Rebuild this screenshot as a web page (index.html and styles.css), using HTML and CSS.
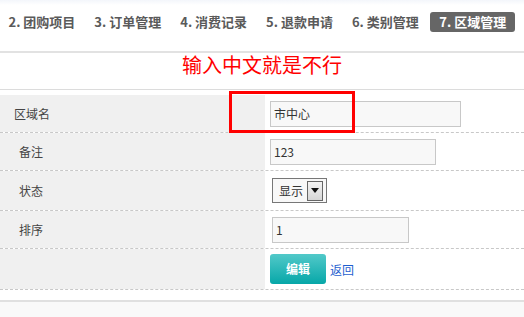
FILE: index.html
```html
<!DOCTYPE html>
<html lang="zh">
<head>
<meta charset="utf-8">
<link rel="stylesheet" href="styles.css">
</head>
<body>
<div class="tabs">
  <span class="tab">2. 团购项目</span>
  <span class="tab">3. 订单管理</span>
  <span class="tab">4. 消费记录</span>
  <span class="tab">5. 退款申请</span>
  <span class="tab">6. 类别管理</span>
  <span class="tab active">7. 区域管理</span>
</div>
<div class="notice">输入中文就是不行</div>
<div class="form">
  <div class="row r1">
    <div class="label first">区域名</div>
    <div class="value">
      <span class="hl-wrap">
        <input class="inp wide" type="text" value="市中心">
        <span class="highlight"></span>
      </span>
    </div>
  </div>
  <div class="row r2">
    <div class="label">备注</div>
    <div class="value"><input class="inp mid" type="text" value="123"></div>
  </div>
  <div class="row r3">
    <div class="label">状态</div>
    <div class="value">
      <div class="select"><span class="sel-text">显示</span><span class="sel-btn"><svg width="8" height="5" viewBox="0 0 8 5"><path d="M0 0H8L4 5Z" fill="#111"/></svg></span></div>
    </div>
  </div>
  <div class="row r4">
    <div class="label">排序</div>
    <div class="value"><input class="inp short" type="text" value="1"></div>
  </div>
  <div class="row r5">
    <div class="label"></div>
    <div class="value actions">
      <span class="btn">编辑</span>
      <a class="back" href="#">返回</a>
    </div>
  </div>
</div>
<div class="footer"></div>
</body>
</html>
```
FILE: styles.css
```css
html, body {
  margin: 0;
  padding: 0;
  background: #fff;
  font-family: "Noto Sans CJK SC", "Liberation Sans", sans-serif;
  font-size: 12px;
  color: #444;
}
.tabs {
  height: 53px;
  box-sizing: border-box;
  padding: 12px 0 0 0;
  margin-left: -1px;
  display: flex;
  background: linear-gradient(#f3f6fb 0, #fff 5px);
  border-bottom: 2px solid #e2e2e2;
}
.tab {
  height: 20px;
  line-height: 20px;
  padding: 0 9.5px;
  font-size: 13px;
  font-weight: bold;
  color: #5a5a5a;
  white-space: nowrap;
}
.tab.active {
  background: #666;
  color: #fff;
  border-radius: 3px;
  margin-left: 2px;
  padding: 0 9px;
}
.notice {
  height: 37px;
  box-sizing: border-box;
  padding-top: 1px;
  line-height: 22px;
  font-size: 20px;
  text-align: center;
  color: #ff0000;
  border-bottom: 1px solid #dcdcdc;
  margin-bottom: 5px;
}
.form {
  display: flex;
  flex-direction: column;
}
.row {
  display: grid;
  grid-template-columns: 265px 1fr;
  border-bottom: 1px dashed #c8c8c8;
}
.r1, .r2, .r4 { height: 37px; }
.r3 { height: 39px; }
.r5 { height: 40px; }
.label {
  background: #f0f0f0;
  display: flex;
  align-items: center;
  padding-left: 19px;
  color: #444;
}
.label.first { padding-left: 14px; }
.value {
  display: flex;
  align-items: center;
  padding-left: 5px;
}
.inp {
  box-sizing: border-box;
  height: 26px;
  border: 1px solid #c8c8c8;
  background: #f8f8f8;
  font-family: "Noto Sans CJK SC", "Liberation Sans", sans-serif;
  font-size: 12px;
  color: #333;
  padding: 0 3px;
  margin: 0;
  outline: none;
}
.inp.wide { width: 191px; }
.inp.mid { width: 166px; }
.inp.short { width: 137px; margin-left: 2px; }
.hl-wrap {
  position: relative;
  display: inline-flex;
}
.highlight {
  position: absolute;
  left: -41px;
  top: -10px;
  width: 126px;
  height: 42px;
  box-sizing: border-box;
  border: 3px solid #ff0000;
}
.select {
  margin-left: 2px;
  box-sizing: border-box;
  width: 55px;
  height: 25px;
  border: 1px solid #777;
  background: #f8f8f8;
  display: flex;
  align-items: center;
  justify-content: space-between;
  padding: 0 3px 0 6px;
}
.sel-text { color: #333; }
.sel-btn {
  box-sizing: border-box;
  width: 16px;
  height: 20px;
  border: 1px solid #666;
  background: linear-gradient(#f4f4f4, #d6d6d6);
  display: flex;
  align-items: center;
  justify-content: center;
}
.actions { gap: 4px; }
.btn {
  width: 56px;
  height: 30px;
  line-height: 30px;
  text-align: center;
  border-radius: 3px;
  background: linear-gradient(#52c9c9, #07a7a8);
  color: #fff;
  font-weight: bold;
  font-size: 12px;
}
.back {
  color: #1f5fcf;
  text-decoration: none;
}
.footer {
  margin-top: 10px;
  height: 20px;
  background: #f9f9f9;
  border-top: 2px solid #e0e0e0;
}
```
